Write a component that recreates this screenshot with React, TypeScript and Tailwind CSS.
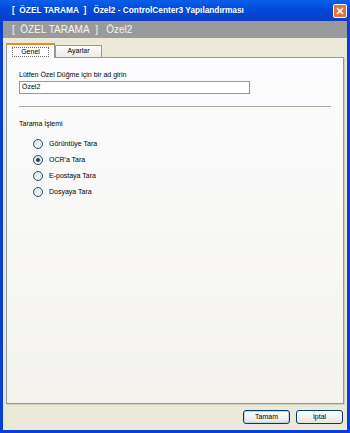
const options = ["Görüntüye Tara", "OCR'a Tara", "E-postaya Tara", "Dosyaya Tara"];

function Radio({ checked }: { checked?: boolean }) {
  return (
    <span className="flex h-[10px] w-[10px] items-center justify-center rounded-full border border-[#1c5180] bg-gradient-to-br from-[#dcdcd6] to-white">
      {checked && <span className="h-[4px] w-[4px] rounded-full bg-[#3a3a3a]" />}
    </span>
  );
}

export default function App() {
  return (
    <div
      className="flex h-[433px] w-[350px] flex-col overflow-hidden bg-[#0a3fd6] text-black"
      style={{ fontFamily: '"Liberation Sans", Arial, sans-serif' }}
    >
      {/* title bar */}
      <div className="flex h-[21px] shrink-0 items-center justify-between bg-gradient-to-b from-[#0a5fe8] via-[#0048d8] to-[#0b3fc4] pl-[12px] pr-[3px]">
        <span className="text-[8.3px] font-bold text-white">
          [&nbsp; ÖZEL TARAMA&nbsp; ]&nbsp;&nbsp; Özel2 - ControlCenter3 Yapılandırması
        </span>
        <span className="flex h-[14px] w-[14px] items-center justify-center rounded-[2px] border border-white bg-[#e0733e]">
          <svg width="8" height="8" viewBox="0 0 8 8">
            <path d="M1 1 L7 7 M7 1 L1 7" stroke="white" strokeWidth="1.6" />
          </svg>
        </span>
      </div>

      <div className="mx-[3px] mb-[3px] flex flex-1 flex-col bg-[#ece9d8]">
        {/* header band */}
        <div className="flex h-[17px] shrink-0 items-center bg-[#9a9a9a] pl-[9px] text-[10px] text-[#f4f4f4]">
          [&nbsp; ÖZEL TARAMA&nbsp; ]&nbsp;&nbsp; Özel2
        </div>

        <div className="flex flex-1 flex-col px-[3px] pt-[5px]">
          {/* tabs */}
          <div className="flex h-[14px] items-end text-[7px]">
            <div className="relative z-10 -mb-px flex h-[15px] w-[49px] items-center justify-center border border-b-0 border-[#919b9c] border-t-[#e68b2c] border-t-2 bg-[#fcfcfe]">
              <span className="border border-dotted border-[#666] px-[8px] leading-[8px]">Genel</span>
            </div>
            <div className="flex h-[12px] w-[47px] items-center justify-center border border-b-0 border-[#919b9c] bg-gradient-to-b from-white to-[#ecebe5]">
              Ayarlar
            </div>
          </div>

          {/* panel */}
          <div className="flex flex-1 flex-col border border-[#919b9c] bg-gradient-to-b from-[#fcfcfe] to-[#f4f3ee] pl-[12px] pr-[12px] pt-[12px] text-[7px] shadow-[1px_1px_0_#d0d0bf]">
            <div className="leading-[9px]">Lütfen Özel Düğme için bir ad girin</div>
            <div className="mt-[2px] flex h-[13px] w-[231px] items-center border border-[#7f9db9] bg-white pl-[2px]">
              Özel2
            </div>
            <div className="mt-[12px] h-px w-[312px] bg-[#aca899] shadow-[0_1px_0_white]" />
            <div className="mt-[12px] leading-[9px]">Tarama İşlemi</div>
            <div className="mt-[11px] flex flex-col gap-[6px] pl-[14px]">
              {options.map((o, i) => (
                <div key={o} className="flex h-[10px] items-center gap-[6px]">
                  <Radio checked={i === 1} />
                  <span>{o}</span>
                </div>
              ))}
            </div>
          </div>

          {/* buttons */}
          <div className="flex h-[26px] shrink-0 items-center justify-end gap-[6px] pr-[1px]">
            <button className="h-[14px] w-[47px] rounded-[3px] border border-[#003c74] bg-gradient-to-b from-white to-[#e6e5df] text-[7px] shadow-[inset_0_0_0_1px_#bcd0ee]">
              Tamam
            </button>
            <button className="h-[14px] w-[47px] rounded-[3px] border border-[#003c74] bg-gradient-to-b from-white to-[#e6e5df] text-[7px]">
              İptal
            </button>
          </div>
        </div>
      </div>
    </div>
  );
}
